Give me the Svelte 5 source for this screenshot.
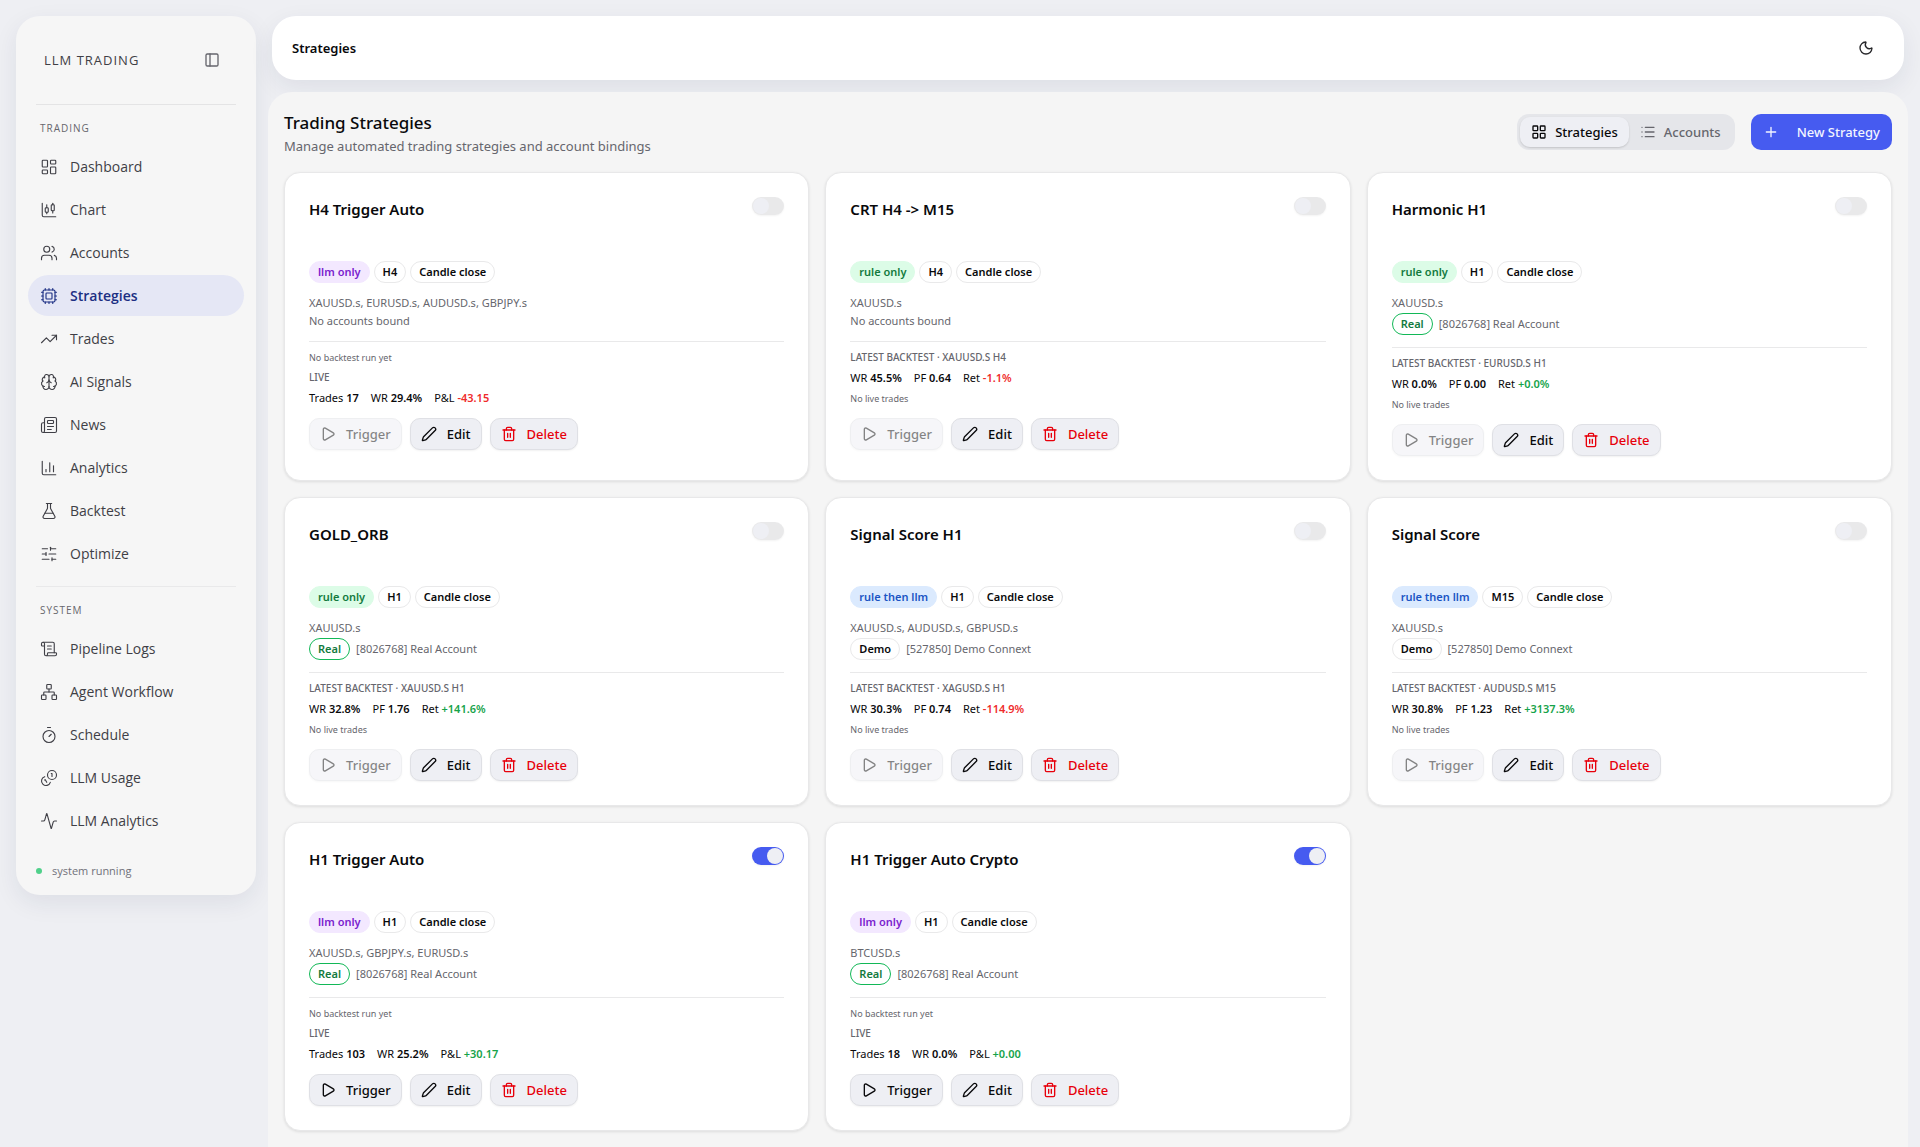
<script>
    const nav = [
        {
            title: "Trading",
            items: [
                { name: "Dashboard", icon: "dashboard" },
                { name: "Chart", icon: "candles" },
                { name: "Accounts", icon: "users" },
                { name: "Strategies", icon: "cpu", active: true },
                { name: "Trades", icon: "trend" },
                { name: "AI Signals", icon: "brain" },
                { name: "News", icon: "news" },
                { name: "Analytics", icon: "bars" },
                { name: "Backtest", icon: "flask" },
                { name: "Optimize", icon: "sliders" },
            ],
        },
        {
            title: "System",
            items: [
                { name: "Pipeline Logs", icon: "scroll" },
                { name: "Agent Workflow", icon: "network" },
                { name: "Schedule", icon: "timer" },
                { name: "LLM Usage", icon: "coins" },
                { name: "LLM Analytics", icon: "activity" },
            ],
        },
    ];

    const icons = {
        dashboard: '<rect x="3" y="3" width="7" height="9" rx="1"/><rect x="14" y="3" width="7" height="5" rx="1"/><rect x="14" y="12" width="7" height="9" rx="1"/><rect x="3" y="16" width="7" height="5" rx="1"/>',
        candles: '<path d="M9 5v4"/><rect width="4" height="6" x="7" y="9" rx="1"/><path d="M9 15v2"/><path d="M17 3v2"/><rect width="4" height="8" x="15" y="5" rx="1"/><path d="M17 13v3"/><path d="M3 3v16a2 2 0 0 0 2 2h16"/>',
        users: '<path d="M16 21v-2a4 4 0 0 0-4-4H6a4 4 0 0 0-4 4v2"/><path d="M16 3.128a4 4 0 0 1 0 7.744"/><path d="M22 21v-2a4 4 0 0 0-3-3.87"/><circle cx="9" cy="7" r="4"/>',
        cpu: '<path d="M12 20v2M12 2v2M17 20v2M17 2v2M2 12h2M2 17h2M2 7h2M20 12h2M20 17h2M20 7h2M7 20v2M7 2v2"/><rect x="4" y="4" width="16" height="16" rx="2"/><rect x="8" y="8" width="8" height="8" rx="1"/>',
        trend: '<path d="M16 7h6v6"/><path d="m22 7-8.5 8.5-5-5L2 17"/>',
        brain: '<path d="M12 18V5"/><path d="M15 13a4.17 4.17 0 0 1-3-4 4.17 4.17 0 0 1-3 4"/><path d="M17.598 6.5A3 3 0 1 0 12 5a3 3 0 1 0-5.598 1.5"/><path d="M17.997 5.125a4 4 0 0 1 2.526 5.77"/><path d="M18 18a4 4 0 0 0 2-7.464"/><path d="M19.967 17.483A4 4 0 1 1 12 18a4 4 0 1 1-7.967-.517"/><path d="M6 18a4 4 0 0 1-2-7.464"/><path d="M6.003 5.125a4 4 0 0 0-2.526 5.77"/>',
        news: '<path d="M15 18h-5"/><path d="M18 14h-8"/><path d="M4 22h16a2 2 0 0 0 2-2V4a2 2 0 0 0-2-2H8a2 2 0 0 0-2 2v16a2 2 0 0 1-4 0v-9a2 2 0 0 1 2-2h2"/><rect width="8" height="4" x="10" y="6" rx="1"/>',
        bars: '<path d="M3 3v16a2 2 0 0 0 2 2h16"/><path d="M18 17V9"/><path d="M13 17V5"/><path d="M8 17v-3"/>',
        flask: '<path d="M14 2v6a2 2 0 0 0 .245.96l5.51 10.08A2 2 0 0 1 18 22H6a2 2 0 0 1-1.755-2.96l5.51-10.08A2 2 0 0 0 10 8V2"/><path d="M6.453 15h11.094"/><path d="M8.5 2h7"/>',
        sliders: '<path d="M10 5H3"/><path d="M12 19H3"/><path d="M14 3v4"/><path d="M16 17v4"/><path d="M21 12h-9"/><path d="M21 19h-5"/><path d="M21 5h-7"/><path d="M8 10v4"/><path d="M8 12H3"/>',
        scroll: '<path d="M15 12h-5"/><path d="M15 8h-5"/><path d="M19 17V5a2 2 0 0 0-2-2H4"/><path d="M8 21h12a2 2 0 0 0 2-2v-1a1 1 0 0 0-1-1H11a1 1 0 0 0-1 1v1a2 2 0 1 1-4 0V5a2 2 0 1 0-4 0v2a1 1 0 0 0 1 1h3"/>',
        network: '<rect x="16" y="16" width="6" height="6" rx="1"/><rect x="2" y="16" width="6" height="6" rx="1"/><rect x="9" y="2" width="6" height="6" rx="1"/><path d="M5 16v-3a1 1 0 0 1 1-1h12a1 1 0 0 1 1 1v3"/><path d="M12 12V8"/>',
        timer: '<path d="M10 2h4"/><path d="m12 14 3-3"/><circle cx="12" cy="14" r="8"/>',
        coins: '<path d="M13.744 17.736a6 6 0 1 1-7.48-7.48"/><path d="M15 6h1v4"/><path d="m6.134 14.768.866-.5 2 3.464"/><circle cx="16" cy="8" r="6"/>',
        activity: '<path d="M22 12h-2.48a2 2 0 0 0-1.93 1.46l-2.35 8.36a.25.25 0 0 1-.48 0L9.24 2.18a.25.25 0 0 0-.48 0l-2.35 8.36A2 2 0 0 1 4.49 12H2"/>',
        panel: '<rect width="18" height="18" x="3" y="3" rx="2"/><path d="M9 3v18"/>',
        moon: '<path d="M20.985 12.486a9 9 0 1 1-9.473-9.472c.405-.022.617.46.402.803a6 6 0 0 0 8.268 8.268c.344-.215.825-.004.803.401"/>',
        grid: '<rect width="7" height="7" x="3" y="3" rx="1"/><rect width="7" height="7" x="14" y="3" rx="1"/><rect width="7" height="7" x="14" y="14" rx="1"/><rect width="7" height="7" x="3" y="14" rx="1"/>',
        list: '<path d="M3 5h.01M3 12h.01M3 19h.01M8 5h13M8 12h13M8 19h13"/>',
        plus: '<path d="M5 12h14M12 5v14"/>',
        play: '<path d="M5 5a2 2 0 0 1 3.008-1.728l11.997 6.998a2 2 0 0 1 .003 3.458l-12 7A2 2 0 0 1 5 19z"/>',
        pencil: '<path d="M21.174 6.812a1 1 0 0 0-3.986-3.987L3.842 16.174a2 2 0 0 0-.5.83l-1.321 4.352a.5.5 0 0 0 .623.622l4.353-1.32a2 2 0 0 0 .83-.497z"/>',
        trash: '<path d="M10 11v6M14 11v6"/><path d="M19 6v14a2 2 0 0 1-2 2H7a2 2 0 0 1-2-2V6"/><path d="M3 6h18"/><path d="M8 6V4a2 2 0 0 1 2-2h4a2 2 0 0 1 2 2v2"/>',
    };

    const real = { type: "Real", label: "[8026768] Real Account" };
    const demo = { type: "Demo", label: "[527850] Demo Connext" };

    let strategies = $state([
        { name: "H4 Trigger Auto", mode: "llm only", tf: "H4", symbols: "XAUUSD.s, EURUSD.s, AUDUSD.s, GBPJPY.s", live: ["17", "29.4%", "-43.15"], enabled: false },
        { name: "CRT H4 -> M15", mode: "rule only", tf: "H4", symbols: "XAUUSD.s", backtest: ["XAUUSD.s H4", "45.5%", "0.64", "-1.1%"], enabled: false },
        { name: "Harmonic H1", mode: "rule only", tf: "H1", symbols: "XAUUSD.s", account: real, backtest: ["EURUSD.s H1", "0.0%", "0.00", "+0.0%"], enabled: false },
        { name: "GOLD_ORB", mode: "rule only", tf: "H1", symbols: "XAUUSD.s", account: real, backtest: ["XAUUSD.s H1", "32.8%", "1.76", "+141.6%"], enabled: false },
        { name: "Signal Score H1", mode: "rule then llm", tf: "H1", symbols: "XAUUSD.s, AUDUSD.s, GBPUSD.s", account: demo, backtest: ["XAGUSD.s H1", "30.3%", "0.74", "-114.9%"], enabled: false },
        { name: "Signal Score", mode: "rule then llm", tf: "M15", symbols: "XAUUSD.s", account: demo, backtest: ["AUDUSD.s M15", "30.8%", "1.23", "+3137.3%"], enabled: false },
        { name: "H1 Trigger Auto", mode: "llm only", tf: "H1", symbols: "XAUUSD.s, GBPJPY.s, EURUSD.s", account: real, live: ["103", "25.2%", "+30.17"], enabled: true },
        { name: "H1 Trigger Auto Crypto", mode: "llm only", tf: "H1", symbols: "BTCUSD.s", account: real, live: ["18", "0.0%", "+0.00"], enabled: true },
    ]);

    let view = $state("Strategies");

    function modeClass(mode) {
        return mode.replaceAll(" ", "-");
    }

    function sign(value) {
        return value.startsWith("-") ? "loss" : "gain";
    }
</script>

{#snippet icon(name)}
    <svg class="icon" viewBox="0 0 24 24" aria-hidden="true">{@html icons[name]}</svg>
{/snippet}

<div class="layout">
    <aside class="sidebar">
        <div class="brand">
            <span>LLM TRADING</span>
            <button class="icon-button muted" aria-label="Collapse sidebar">{@render icon("panel")}</button>
        </div>
        <nav>
            {#each nav as group}
                <section>
                    <h2>{group.title}</h2>
                    <ul>
                        {#each group.items as item}
                            <li>
                                <a href="#{item.icon}" class:active={item.active}>
                                    {@render icon(item.icon)}
                                    {item.name}
                                </a>
                            </li>
                        {/each}
                    </ul>
                </section>
            {/each}
        </nav>
        <div class="status"><span class="dot"></span>system running</div>
    </aside>

    <div class="content">
        <header class="topbar">
            <span>Strategies</span>
            <button class="icon-button" aria-label="Toggle theme">{@render icon("moon")}</button>
        </header>

        <main>
            <div class="page-head">
                <div>
                    <h1>Trading Strategies</h1>
                    <p>Manage automated trading strategies and account bindings</p>
                </div>
                <div class="actions">
                    <div class="tabs">
                        <button class:selected={view === "Strategies"} onclick={() => (view = "Strategies")}>
                            {@render icon("grid")}Strategies
                        </button>
                        <button class:selected={view === "Accounts"} onclick={() => (view = "Accounts")}>
                            {@render icon("list")}Accounts
                        </button>
                    </div>
                    <button class="primary">{@render icon("plus")}New Strategy</button>
                </div>
            </div>

            <div class="cards">
                {#each strategies as s}
                    <article class="card">
                        <div class="card-head">
                            <h3>{s.name}</h3>
                            <input type="checkbox" role="switch" class="switch" aria-label="Enable {s.name}" bind:checked={s.enabled}>
                        </div>
                        <div class="badges">
                            <span class="badge {modeClass(s.mode)}">{s.mode}</span>
                            <span class="badge">{s.tf}</span>
                            <span class="badge">Candle close</span>
                        </div>
                        <div class="bindings">
                            <div>{s.symbols}</div>
                            {#if s.account}
                                <div class="account">
                                    <span class="badge" class:real={s.account.type === "Real"}>{s.account.type}</span>
                                    {s.account.label}
                                </div>
                            {:else}
                                <div>No accounts bound</div>
                            {/if}
                        </div>
                        <div class="stats">
                            {#if s.backtest}
                                <div class="label">Latest backtest · {s.backtest[0]}</div>
                                <div class="values">
                                    <span>WR <b>{s.backtest[1]}</b></span>
                                    <span>PF <b>{s.backtest[2]}</b></span>
                                    <span>Ret <b class={sign(s.backtest[3])}>{s.backtest[3]}</b></span>
                                </div>
                            {:else}
                                <div class="note">No backtest run yet</div>
                            {/if}
                            {#if s.live}
                                <div class="label">Live</div>
                                <div class="values">
                                    <span>Trades <b>{s.live[0]}</b></span>
                                    <span>WR <b>{s.live[1]}</b></span>
                                    <span>P&amp;L <b class={sign(s.live[2])}>{s.live[2]}</b></span>
                                </div>
                            {:else}
                                <div class="note">No live trades</div>
                            {/if}
                        </div>
                        <div class="buttons">
                            <button disabled={!s.enabled}>{@render icon("play")}Trigger</button>
                            <button>{@render icon("pencil")}Edit</button>
                            <button class="danger">{@render icon("trash")}Delete</button>
                        </div>
                    </article>
                {/each}
            </div>
        </main>
    </div>
</div>

<style>
    :global(body) {
        background: #eeeff3;
        color: #09090b;
        font-family: "Noto Sans", sans-serif;
        font-size: 13px;
        line-height: 20px;
        overflow: hidden;
    }
    h1, h2, h3, p, ul {
        margin: 0;
        padding: 0;
        list-style: none;
    }
    button {
        display: inline-flex;
        align-items: center;
        border: 0;
        padding: 0;
        background: none;
        color: inherit;
        font: inherit;
        font-weight: 500;
        white-space: nowrap;
        cursor: pointer;
    }
    .icon {
        width: 16px;
        height: 16px;
        flex: none;
        fill: none;
        stroke: currentColor;
        stroke-width: 2;
        stroke-linecap: round;
        stroke-linejoin: round;
    }
    .icon-button {
        color: #27272a;
    }
    .icon-button.muted {
        color: #66666d;
    }
    .layout {
        display: flex;
        align-items: flex-start;
        gap: 12px;
        padding: 16px 12px 0 16px;
    }

    /* sidebar */
    .sidebar {
        box-sizing: border-box;
        flex: none;
        width: 240px;
        padding: 20px 12px 14px;
        border-radius: 24px;
        background: #f6f6f6;
        box-shadow: 0 8px 24px rgba(30, 41, 80, 0.08);
        color: #3f3f46;
        font-family: "Open Sans", sans-serif;
    }
    .brand {
        display: flex;
        justify-content: space-between;
        align-items: center;
        height: 48px;
        margin: 0 8px;
        padding: 0 16px 20px 8px;
        border-bottom: 1px solid #e4e4e5;
        font-weight: 500;
        letter-spacing: 1px;
    }
    .sidebar section {
        padding-top: 15px;
    }
    .sidebar section + section {
        margin: 12px 8px 0;
        border-top: 1px solid #e9e9ea;
    }
    .sidebar section + section > * {
        margin: 0 -8px;
    }
    .sidebar h2 {
        padding-left: 12px;
        font-size: 10px;
        line-height: 16px;
        font-weight: 500;
        letter-spacing: 1px;
        text-transform: uppercase;
        color: #66666d;
    }
    .sidebar ul {
        display: grid;
        gap: 2px;
        padding-top: 10px;
    }
    .sidebar a {
        display: flex;
        align-items: center;
        gap: 12px;
        height: 41px;
        padding: 0 12px;
        border-radius: 21px;
        color: inherit;
        font-size: 14px;
        text-decoration: none;
    }
    .sidebar a .icon {
        width: 18px;
        height: 18px;
        stroke-width: 1.5;
    }
    .sidebar a.active {
        background: #e5e7f5;
        color: #1c2f83;
        font-weight: 600;
    }
    .status {
        display: flex;
        align-items: center;
        gap: 10px;
        padding: 20px 8px 0;
        color: #71717a;
        font-size: 11px;
    }
    .dot {
        width: 6px;
        height: 6px;
        border-radius: 50%;
        background: #4fd08a;
    }

    /* page */
    .content {
        flex: 1;
        min-width: 0;
    }
    .topbar {
        display: flex;
        justify-content: space-between;
        align-items: center;
        height: 64px;
        margin: 0 4px 12px;
        padding: 0 30px 0 20px;
        box-sizing: border-box;
        border-radius: 24px;
        background: #fff;
        box-shadow: 0 8px 24px rgba(30, 41, 80, 0.08);
        font-weight: 600;
    }
    main {
        padding: 18px 16px 16px;
        border-radius: 24px 24px 0 0;
        background: #f5f5f5;
    }
    .page-head,
    .actions {
        display: flex;
        justify-content: space-between;
        gap: 16px;
    }
    .actions {
        padding-top: 4px;
    }
    h1 {
        font-size: 17px;
        line-height: 26px;
        font-weight: 500;
    }
    .page-head p {
        color: #66666d;
    }
    .tabs {
        display: flex;
        height: 30px;
        padding: 3px;
        border-radius: 12px;
        background: #e5e6ea;
    }
    .tabs button {
        gap: 8px;
        height: 30px;
        padding: 0 11px;
        border-radius: 10px;
        color: #66666d;
    }
    .tabs .selected {
        background: #eeeff4;
        color: #09090b;
        box-shadow: 0 1px 2px rgba(0, 0, 0, 0.15);
    }
    .primary {
        gap: 18px;
        height: 36px;
        padding: 0 12px;
        border-radius: 10px;
        background: #465bf0;
        color: #f2f5ff;
    }

    /* cards */
    .cards {
        display: grid;
        grid-template-columns: repeat(3, minmax(0, 1fr));
        gap: 16px;
        margin-top: 16px;
    }
    .card {
        padding: 24px;
        border: 1px solid #e8e8e9;
        border-radius: 16px;
        background: #fff;
        box-shadow: 0 1px 3px rgba(0, 0, 0, 0.1);
    }
    .card-head {
        display: flex;
        justify-content: space-between;
        align-items: flex-start;
        height: 64px;
    }
    h3 {
        font-size: 15px;
        line-height: 24px;
        font-weight: 600;
    }
    .switch {
        appearance: none;
        width: 32px;
        height: 18px;
        margin: 0;
        padding: 1px;
        box-sizing: border-box;
        border-radius: 9px;
        background: #e9e9ea;
        box-shadow: 0 1px 2px rgba(0, 0, 0, 0.05);
    }
    .switch::before {
        content: "";
        display: block;
        width: 16px;
        height: 16px;
        border-radius: 50%;
        background: #eeeff4;
    }
    .switch:checked {
        background: #465bf0;
    }
    .switch:checked::before {
        margin-left: 14px;
    }
    .badges {
        display: flex;
        gap: 4px;
    }
    .badge {
        padding: 2px 8px;
        border: 1px solid #e9e9ea;
        border-radius: 11px;
        color: #09090b;
        font-size: 11px;
        line-height: 16px;
        font-weight: 600;
    }
    .llm-only {
        border-color: #f3e8ff;
        background: #f3e8ff;
        color: #7a22ce;
    }
    .rule-only {
        border-color: #dcfce7;
        background: #dcfce7;
        color: #137a3e;
    }
    .rule-then-llm {
        border-color: #dbeafe;
        background: #dbeafe;
        color: #1a54c4;
    }
    .real {
        border-color: #12b857;
        color: #137a3e;
    }
    .bindings {
        display: grid;
        gap: 2px;
        margin: 12px 0;
        color: #66666d;
        font-size: 11px;
        line-height: 16px;
    }
    .account {
        display: flex;
        align-items: center;
        gap: 6px;
    }
    .stats {
        display: grid;
        gap: 5px;
        padding-top: 8px;
        border-top: 1px solid #e9e9ea;
    }
    .label,
    .note {
        color: #66666d;
        font-size: 9px;
        line-height: 15px;
    }
    .label {
        font-size: 10px;
        font-weight: 500;
        text-transform: uppercase;
    }
    .values {
        display: flex;
        gap: 12px;
        font-size: 11px;
        line-height: 16px;
    }
    .values b {
        font-weight: 600;
    }
    .values .gain {
        color: #16a34a;
    }
    .values .loss {
        color: #ef2b2b;
    }
    .buttons {
        display: flex;
        gap: 8px;
        margin-top: 12px;
    }
    .buttons button {
        gap: 10px;
        height: 32px;
        padding: 0 10px;
        border: 1px solid #dfe0e5;
        border-radius: 10px;
        background: #eeeff4;
        box-shadow: 0 1px 2px rgba(0, 0, 0, 0.06);
    }
    .buttons button:disabled {
        opacity: 0.5;
    }
    .buttons .danger {
        color: #e7000b;
    }
</style>
